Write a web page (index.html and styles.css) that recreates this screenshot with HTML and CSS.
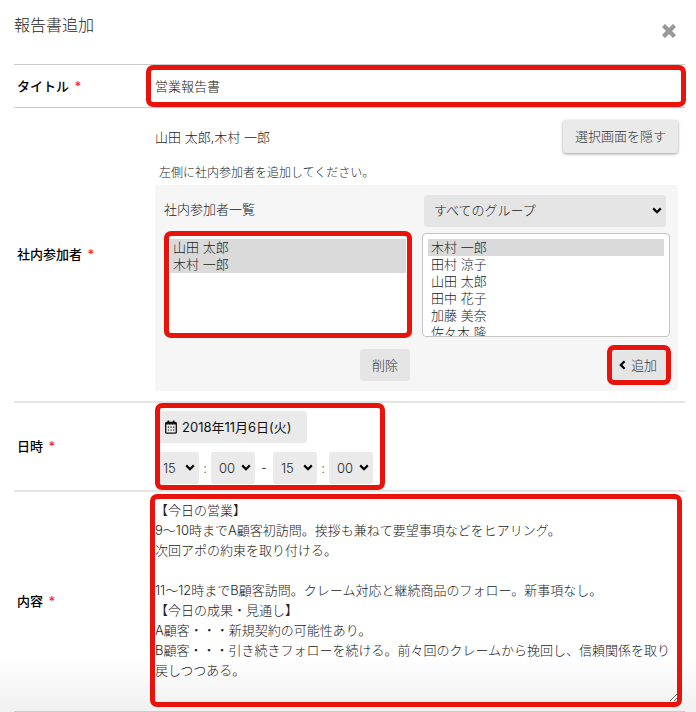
FILE: index.html
```html
<!DOCTYPE html>
<html lang="ja">
<head>
<meta charset="utf-8">
<meta name="viewport" content="width=device-width, initial-scale=1">
<title>報告書追加</title>
<link rel="stylesheet" href="styles.css">
</head>
<body>
<svg class="sprite" aria-hidden="true">
  <symbol id="chevron" viewBox="0 0 10 7"><path d="M1.2 1.4 5 5.2 8.8 1.4" fill="none" stroke="currentColor" stroke-width="2.2"/></symbol>
</svg>
<main class="dialog">
  <header class="dialog-head">
    <h1>報告書追加</h1>
    <button class="close" type="button" aria-label="閉じる">
      <svg viewBox="0 0 14 14" width="14" height="14"><path d="M3 3 11 11M11 3 3 11" fill="none" stroke="currentColor" stroke-width="4.4" stroke-linecap="square" stroke-linejoin="round"/></svg>
    </button>
  </header>
  <form class="form">
    <div class="row row-title">
      <label class="label" for="title">タイトル <span class="req">*</span></label>
      <div class="field mark mark-title"><input id="title" type="text" value="営業報告書"></div>
    </div>

    <div class="row row-members">
      <label class="label" for="members">社内参加者 <span class="req">*</span></label>
      <div class="field field-inset">
        <div class="summary">
          <span>山田 太郎,木村 一郎</span>
          <button class="btn btn-raised" type="button">選択画面を隠す</button>
        </div>
        <p class="hint">左側に社内参加者を追加してください。</p>
        <div class="panel">
          <div class="panel-title">社内参加者一覧</div>
          <div class="drop group">
            <select aria-label="グループ"><option>すべてのグループ</option></select>
            <svg class="chev"><use href="#chevron"/></svg>
          </div>
          <div class="list-wrap mark mark-list">
            <select class="list list-chosen" id="members" multiple>
              <option selected>山田 太郎</option>
              <option selected>木村 一郎</option>
            </select>
          </div>
          <div class="list-wrap">
            <select class="list" multiple aria-label="追加候補">
              <option selected>木村 一郎</option>
              <option>田村 涼子</option>
              <option>山田 太郎</option>
              <option>田中 花子</option>
              <option>加藤 美奈</option>
              <option>佐々木 隆</option>
            </select>
          </div>
          <div class="action"><button class="btn" type="button">削除</button></div>
          <div class="action">
            <span class="mark mark-add"><button class="btn btn-add" type="button"><svg viewBox="0 0 7 10" width="7" height="10"><path d="M5.6 1.2 1.8 5 5.6 8.8" fill="none" stroke="#000" stroke-width="2.2"/></svg>追加</button></span>
          </div>
        </div>
      </div>
    </div>

    <div class="row row-date">
      <label class="label" for="date">日時 <span class="req">*</span></label>
      <div class="field">
        <div class="when mark mark-date">
          <button class="date" id="date" type="button">
            <svg viewBox="0 0 12 14" width="12" height="14"><rect x=".7" y="2.4" width="10.6" height="10.8" rx="1" fill="none" stroke="#111" stroke-width="1.3"/><path d="M.8 3.6h10.4M3.4.4v2.6M8.6.4v2.6" stroke="#111" stroke-width="1.8"/><path d="M2.9 7.2h6.4M2.9 10h6.4" stroke="#111" stroke-width="1.2" stroke-dasharray="1.2 1.4"/></svg>2018年11月6日(火)
          </button>
          <div class="times">
            <div class="drop time"><select aria-label="開始時"><option>15</option></select><svg class="chev"><use href="#chevron"/></svg></div>
            <span class="sep">:</span>
            <div class="drop time"><select aria-label="開始分"><option>00</option></select><svg class="chev"><use href="#chevron"/></svg></div>
            <span class="sep sep-dash">-</span>
            <div class="drop time"><select aria-label="終了時"><option>15</option></select><svg class="chev"><use href="#chevron"/></svg></div>
            <span class="sep">:</span>
            <div class="drop time"><select aria-label="終了分"><option>00</option></select><svg class="chev"><use href="#chevron"/></svg></div>
          </div>
        </div>
      </div>
    </div>

    <div class="row row-body">
      <label class="label" for="body">内容 <span class="req">*</span></label>
      <div class="field field-inset mark mark-body">
        <textarea id="body" rows="10">【今日の営業】
9〜10時までA顧客初訪問。挨拶も兼ねて要望事項などをヒアリング。
次回アポの約束を取り付ける。

11〜12時までB顧客訪問。クレーム対応と継続商品のフォロー。新事項なし。
【今日の成果・見通し】
A顧客・・・新規契約の可能性あり。
B顧客・・・引き続きフォローを続ける。前々回のクレームから挽回し、信頼関係を取り戻しつつある。</textarea>
      </div>
    </div>
  </form>
</main>
</body>
</html>
```
FILE: styles.css
```css
* { box-sizing: border-box; }

body {
  margin: 0;
  background: #fff;
  color: #222;
  font: 300 13px/20px Inter, "Noto Sans CJK JP", sans-serif;
}

button, input, select, textarea {
  margin: 0;
  padding: 0;
  border: 0;
  border-radius: 0;
  background: none;
  color: inherit;
  font: inherit;
}

.sprite { position: absolute; width: 0; height: 0; }

.dialog {
  padding: 0 11px 0 14px;
  background: linear-gradient(to top, #f0f0f0, #fff 56px);
}

.dialog-head {
  display: flex;
  justify-content: space-between;
  height: 64px;
  padding: 13px 9px 0 0;
}

h1 {
  margin: 0;
  font-size: 16px;
  line-height: 24px;
  font-weight: 300;
}

.close {
  align-self: flex-start;
  height: 14px;
  margin-top: 11px;
  color: #999;
}

.close svg { display: block; }

.form { border-top: 1px solid #ccc; }

.row {
  display: grid;
  grid-template-columns: 141px minmax(0, 1fr);
  align-items: center;
  border-bottom: 2px solid #e4e4e4;
}

.row-title,
.row-body { border-bottom: 1px solid #ccc; }

.label {
  padding: 0 0 1px 3px;
  color: #000;
  font-weight: 500;
}

.req {
  margin-left: 2px;
  color: #f22;
}

.field-inset { padding-right: 7px; }

/* Red highlight frames drawn over the fields */
.mark { position: relative; }

.mark::after {
  content: "";
  position: absolute;
  border: 5px solid #e9130b;
  border-radius: 7px;
  pointer-events: none;
}

.mark-title::after { inset: 0 -1px 0 -9px; }
.mark-list::after { inset: -2px 0 -1px 0; }
.mark-add::after { inset: -4px; }
.mark-date::after { inset: 0; }
.mark-body::after { inset: 2px 3px 4px -5px; }

#title {
  display: block;
  width: 100%;
  height: 42px;
  padding-bottom: 2px;
}

.row-members .field { padding-top: 12px; padding-bottom: 10px; }

.summary {
  display: flex;
  justify-content: space-between;
  align-items: center;
}

.btn {
  height: 32px;
  padding: 0 12px;
  border-radius: 3px;
  background: #e5e5e5;
  color: #333;
}

.btn-raised {
  height: 33px;
  padding-bottom: 2px;
  background: #eaeaea;
  box-shadow: 0 1px 3px rgba(0, 0, 0, .4);
}

.hint {
  margin: 10px 0 2px 4px;
  font-size: 12px;
}

.panel {
  display: grid;
  grid-template-columns: 1fr 1fr;
  column-gap: 10px;
  padding: 10px 8px 10px 9px;
  background: #f6f6f6;
}

.panel-title { padding-top: 4px; }

.drop { position: relative; }

.drop select {
  display: block;
  width: 100%;
  height: 32px;
  padding: 0 0 2px 10px;
  border-radius: 3px;
  background: #e5e5e5;
  appearance: none;
}

.chev {
  position: absolute;
  top: 12px;
  right: 4px;
  width: 10px;
  height: 7px;
  color: #000;
  pointer-events: none;
}

.group { margin: 0 4px 0 2px; }

.list-wrap { margin-top: 6px; }

.list {
  display: block;
  width: 100%;
  height: 104px;
  padding: 5px;
  border: 1px solid #c4c4c4;
  border-radius: 4px;
  background: #fff;
  overflow: hidden;
  scrollbar-width: none;
}

.list option {
  display: flex;
  align-items: center;
  height: 17px;
  min-height: 17px;
  padding: 0 3px 2px;
  font-weight: 300;
  line-height: 17px;
}

.list option:checked {
  background: #dadada linear-gradient(#dadada, #dadada);
  color: #222;
}

.action {
  display: flex;
  justify-content: flex-end;
  padding: 12px 2px 0 0;
}

.action .mark-add { margin-right: 1px; }

.btn-add {
  display: flex;
  align-items: center;
  gap: 5px;
  height: 28px;
  margin: 2px 0;
  padding: 0 10px 0 8px;
}

.mark-date {
  display: inline-block;
  padding: 8px 12px 6px 0;
  vertical-align: top;
}

.date {
  display: flex;
  align-items: center;
  gap: 5px;
  height: 32px;
  margin-bottom: 9px;
  padding: 0 15px 0 10px;
  border-radius: 3px;
  background: #eaeaea;
  color: #111;
  font-weight: 400;
}

.times { display: flex; align-items: center; }

.time { width: 44px; }

.time select {
  padding: 0 0 0 8px;
  background: #eaeaea;
}

.sep { width: 12px; text-align: center; }

.sep-dash { width: 18px; }

#body {
  display: block;
  width: 100%;
  height: 210px;
  margin-bottom: 9px;
  padding: 8px 0 0;
  line-height: 20px;
  resize: vertical;
}
```
